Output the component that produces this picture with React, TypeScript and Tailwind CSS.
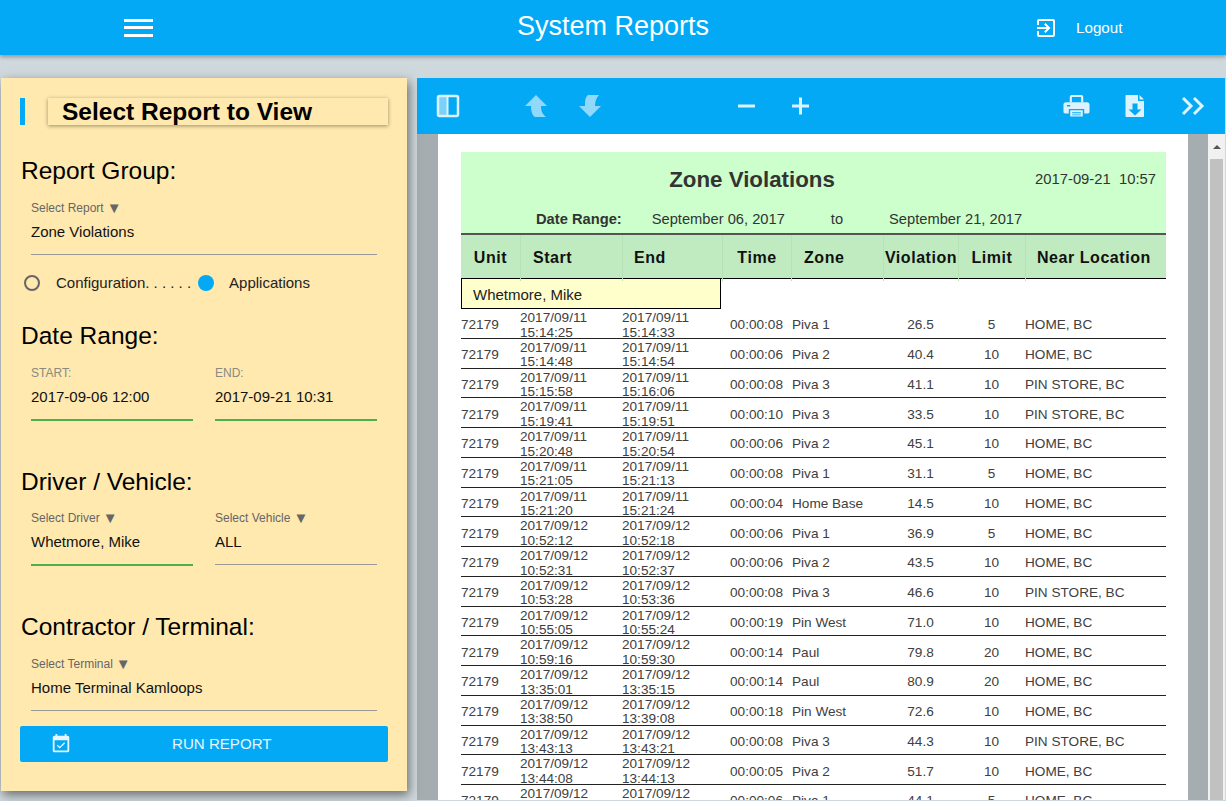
import React from "react";

const cols = "grid grid-cols-[59px_102px_100px_69px_92px_75px_67px_141px]";

type R = [string, string, string, string, string, string, string, string];
const HOME = "HOME, BC";
const PIN = "PIN STORE, BC";
const rows: R[] = [
  ["09/11", "15:14:25", "15:14:33", "08", "Piva 1", "26.5", "5", HOME],
  ["09/11", "15:14:48", "15:14:54", "06", "Piva 2", "40.4", "10", HOME],
  ["09/11", "15:15:58", "15:16:06", "08", "Piva 3", "41.1", "10", PIN],
  ["09/11", "15:19:41", "15:19:51", "10", "Piva 3", "33.5", "10", PIN],
  ["09/11", "15:20:48", "15:20:54", "06", "Piva 2", "45.1", "10", HOME],
  ["09/11", "15:21:05", "15:21:13", "08", "Piva 1", "31.1", "5", HOME],
  ["09/11", "15:21:20", "15:21:24", "04", "Home Base", "14.5", "10", HOME],
  ["09/12", "10:52:12", "10:52:18", "06", "Piva 1", "36.9", "5", HOME],
  ["09/12", "10:52:31", "10:52:37", "06", "Piva 2", "43.5", "10", HOME],
  ["09/12", "10:53:28", "10:53:36", "08", "Piva 3", "46.6", "10", PIN],
  ["09/12", "10:55:05", "10:55:24", "19", "Pin West", "71.0", "10", HOME],
  ["09/12", "10:59:16", "10:59:30", "14", "Paul", "79.8", "20", HOME],
  ["09/12", "13:35:01", "13:35:15", "14", "Paul", "80.9", "20", HOME],
  ["09/12", "13:38:50", "13:39:08", "18", "Pin West", "72.6", "10", HOME],
  ["09/12", "13:43:13", "13:43:21", "08", "Piva 3", "44.3", "10", PIN],
  ["09/12", "13:44:08", "13:44:13", "05", "Piva 2", "51.7", "10", HOME],
  ["09/12", "13:45:02", "13:45:08", "06", "Piva 1", "44.1", "5", HOME],
];

function Heading({ children, cls }: { children: React.ReactNode; cls: string }) {
  return <div className={`h-[30px] text-[24.5px] leading-[30px] text-black ${cls}`}>{children}</div>;
}

function Field({ label, value, green, arrow, cls, light }: { label: string; value: string; green?: boolean; arrow?: boolean; cls: string; light?: boolean }) {
  return (
    <div className={`w-[162px] ${cls}`}>
      <div className={`flex h-[16px] items-center text-[12px] leading-[16px] ${light ? "text-[#8a8a80]" : "text-[#666]"}`}>
        <span>{label}</span>
        {arrow ? <span className="-mt-[2px] ml-[3px] text-[15px] leading-none">▼</span> : null}
      </div>
      <div className="mt-[6px] h-[20px] text-[15px] leading-[20px] text-[#111]">{value}</div>
      {green ? <div className="mt-[12px] h-[2px] bg-[#4caf50]" /> : <div className="mt-[12px] h-px bg-[#999]" />}
    </div>
  );
}

function Toolbar() {
  return (
    <div className="flex h-[56px] shrink-0 items-center bg-[#03a9f4] text-[#dcf3fe]">
      <svg className="ml-[19px] h-[24px] w-[24px]" viewBox="0 0 24 24" fill="none">
        <rect x="2" y="2" width="20" height="20" rx="1.5" stroke="currentColor" strokeWidth="2.5" />
        <rect x="3" y="3" width="8" height="18" fill="currentColor" opacity="0.55" />
        <rect x="10.5" y="3" width="2" height="18" fill="currentColor" />
      </svg>
      <svg className="ml-[64px] h-[24px] w-[24px] opacity-65" viewBox="0 0 24 24" fill="currentColor">
        <path d="M12 1 L23 12 H17 C17 16 18 20 22 23 H11 C8 21 7 17 7 12 H1 Z" />
      </svg>
      <svg className="ml-[30px] h-[24px] w-[24px] opacity-65" viewBox="0 0 24 24" fill="currentColor">
        <path d="M12 23 L23 12 H17 C17 8 18 4 21 1 H10 C7 3 7 8 7 12 H1 Z" />
      </svg>
      <svg className="ml-[132px] h-[24px] w-[24px]" viewBox="0 0 24 24" fill="currentColor">
        <rect x="4" y="10.5" width="17" height="3" />
      </svg>
      <svg className="ml-[30px] h-[24px] w-[24px]" viewBox="0 0 24 24" fill="currentColor">
        <path d="M11 3.500h3v7h7v3h-7v7h-3v-7H4v-3h7z" />
      </svg>
      <svg className="ml-[251px] h-[26px] w-[27px]" viewBox="0 0 28 24" fill="currentColor">
        <path d="M7 2.5C7 1.4 7.9.5 9 .5h10c1.100 0 2 .9 2 2V8h-2.200V2.700H9.200V8H7z" />
        <path d="M3 8h22c1.500 0 2.500 1 2.500 2.500V18c0 1-.8 1.700-1.700 1.700H22V15H6v4.700H2.200C1.300 19.700.500 19 .500 18v-7.500C.5 9 1.500 8 3 8zm1 3v1.500h3.500V11z" fillRule="evenodd" />
        <path d="M7.500 16.500h13V23h-13zM9.500 18.500v1h9v-1zM9.500 20.800v.8h9v-.8z" fillRule="evenodd" />
      </svg>
      <svg className="ml-[33px] h-[24px] w-[24px]" viewBox="0 0 24 24" fill="currentColor">
        <path d="M3.500 1H15v6h6v15c0 .6-.4 1-1 1H3.500c-.6 0-1-.4-1-1V2c0-.6.4-1 1-1zM9.500 9.500v6H5.500l6.500 6 6.500-6h-4v-6z" fillRule="evenodd" />
        <path d="M16.500 1 21 5.500h-4.500z" />
      </svg>
      <svg className="ml-[33px] h-[24px] w-[26px]" viewBox="0 0 26 24" fill="none" stroke="currentColor" strokeWidth="3">
        <path d="M3 4l8 8-8 8" />
        <path d="M14 4l8 8-8 8" />
      </svg>
    </div>
  );
}

export default function App() {
  return (
    <div className="flex h-screen w-screen flex-col overflow-hidden bg-[#cfd8dc] font-['Liberation_Sans',Arial,sans-serif]">
      <header className="relative z-10 grid h-[55px] shrink-0 grid-cols-[1fr_auto_1fr] items-center bg-[#03a9f4] text-white shadow-[0_2px_4px_rgba(0,0,0,0.3)]">
        <div className="pl-[124px]">
          <div className="flex h-[18px] w-[29px] flex-col justify-between">
            <div className="h-[3px] bg-white" />
            <div className="h-[3px] bg-white" />
            <div className="h-[3px] bg-white" />
          </div>
        </div>
        <h1 className="pb-[3px] text-[27px] leading-[32px] font-normal">System Reports</h1>
        <div className="flex items-center pl-[325px]">
          <svg className="h-[24px] w-[24px] shrink-0" viewBox="0 0 24 24" fill="currentColor">
            <path d="M10.090 15.590L11.500 17l5-5-5-5-1.410 1.410L12.670 11H3v2h9.670l-2.580 2.590zM19 3H5c-1.110 0-2 .9-2 2v4h2V5h14v14H5v-4H3v4c0 1.100.89 2 2 2h14c1.100 0 2-.9 2-2V5c0-1.100-.9-2-2-2z" />
          </svg>
          <span className="ml-[18px] text-[15.2px] leading-[20px]">Logout</span>
        </div>
      </header>

      <main className="flex min-h-0 flex-1 items-start gap-[10px] pt-[23px] pl-px">
        <aside className="relative h-[713px] w-[406px] shrink-0 overflow-hidden bg-[#ffe9af] pl-[19px] shadow-[2px_4px_10px_rgba(0,0,0,0.5)]">
          <div className="mt-[20px] flex h-[27px]">
            <div className="h-[27px] w-[5px] bg-[#03a9f4]" />
            <div className="ml-[23px] h-[27px] w-[340px] pl-[14px] text-[24.5px] leading-[27px] font-bold text-black shadow-[0_1px_4px_rgba(0,0,0,0.4)]">
              Select Report to View
            </div>
          </div>

          <Heading cls="mt-[31px] ml-px">Report Group:</Heading>
          <Field cls="mt-[14px] ml-[11px] w-[346px]" label="Select Report" value="Zone Violations" arrow />
          <div className="mt-[18px] ml-[4px] flex h-[20px] items-center text-[15px] text-[#222]">
            <div className="h-[16px] w-[16px] rounded-full border-2 border-[#666]" />
            <span className="ml-[16px]">Configuration. . . . . .</span>
            <div className="ml-[7px] h-[16px] w-[16px] rounded-full bg-[#03a9f4]" />
            <span className="ml-[15px]">Applications</span>
          </div>

          <Heading cls="mt-[28px] ml-px">Date Range:</Heading>
          <div className="mt-[14px] ml-[11px] flex gap-[22px]">
            <Field cls="" label="START:" value="2017-09-06 12:00" green light />
            <Field cls="" label="END:" value="2017-09-21 10:31" green light />
          </div>

          <Heading cls="mt-[46px] ml-px">Driver / Vehicle:</Heading>
          <div className="mt-[13px] ml-[11px] flex items-start gap-[22px]">
            <Field cls="" label="Select Driver" value="Whetmore, Mike" arrow green />
            <Field cls="" label="Select Vehicle" value="ALL" arrow />
          </div>

          <Heading cls="mt-[46px] ml-px">Contractor / Terminal:</Heading>
          <Field cls="mt-[14px] ml-[11px] w-[346px]" label="Select Terminal" value="Home Terminal Kamloops" arrow />

          <button className="mt-[15px] flex h-[36px] w-[368px] items-center rounded-[2px] bg-[#03a9f4] text-[15.1px] text-[#e6f6fe]">
            <svg className="ml-[30px] h-[22px] w-[22px] shrink-0" viewBox="0 0 24 24" fill="currentColor">
              <path d="M16.530 11.060L15.470 10l-4.880 4.880-2.120-2.120-1.060 1.060L10.590 17l5.940-5.940zM19 3h-1V1h-2v2H8V1H6v2H5c-1.110 0-1.990.9-1.990 2L3 19c0 1.100.89 2 2 2h14c1.100 0 2-.9 2-2V5c0-1.100-.9-2-2-2zm0 16H5V8h14v11z" />
            </svg>
            <span className="ml-[100px]">RUN REPORT</span>
          </button>
        </aside>

        <section className="flex h-[722px] w-[808px] shrink-0 flex-col overflow-hidden">
          <Toolbar />
          <div className="flex min-h-0 flex-1 bg-[#a6adb0] pl-[21px]">
            <div className="h-full w-[750px] shrink-0 overflow-hidden bg-white pt-[18px] pl-[23px] text-[#404040]">
              <div className="w-[705px]">
                <div className="relative h-[81px] bg-[#ccffcc] text-[#333]">
                  <div className="h-[54px] pt-[15px] pr-[123px] text-center text-[22.3px] leading-[26px] font-bold">Zone Violations</div>
                  <div className="absolute top-[19px] right-[10px] text-[14.8px] leading-[17px]">2017-09-21&nbsp;&nbsp;10:57</div>
                  <div className="flex h-[26px] items-center text-[14.7px]">
                    <span className="ml-[75px] font-bold">Date Range:</span>
                    <span className="ml-[30px]">September 06, 2017</span>
                    <span className="ml-[46px]">to</span>
                    <span className="ml-[46px]">September 21, 2017</span>
                  </div>
                </div>
                <div className={`${cols} h-[46px] items-stretch border-t-2 border-b border-t-[#555] border-b-black bg-[#c0eabf] text-[16px] leading-[46px] font-bold tracking-[0.55px] text-[#111]`}>
                  <div className="text-center">Unit</div>
                  <div className="border-l border-[#b7e2b6] pl-[12px]">Start</div>
                  <div className="border-l border-[#b7e2b6] pl-[11px]">End</div>
                  <div className="border-l border-[#b7e2b6] text-center">Time</div>
                  <div className="border-l border-[#b7e2b6] pl-[12px]">Zone</div>
                  <div className="border-l border-[#b7e2b6] text-center">Violation</div>
                  <div className="border-l border-[#b7e2b6] text-center">Limit</div>
                  <div className="border-l border-[#b7e2b6] pl-[11px]">Near Location</div>
                </div>
                <div className="flex h-[30px] w-[260px] items-center border border-t-0 border-black bg-[#ffffcc] pt-[3px] pl-[11px] text-[15px] text-[#222]">
                  Whetmore, Mike
                </div>
                {rows.map((r, i) => (
                  <div key={i} className={`${cols} h-[29.75px] items-center border-b border-[#222] pt-[2px] text-[13.6px] leading-[14.5px]`}>
                    <div>72179</div>
                    <div>
                      2017/{r[0]}
                      <br />
                      {r[1]}
                    </div>
                    <div>
                      2017/{r[0]}
                      <br />
                      {r[2]}
                    </div>
                    <div className="text-center">00:00:{r[3]}</div>
                    <div className="pl-px">{r[4]}</div>
                    <div className="text-center">{r[5]}</div>
                    <div className="text-center">{r[6]}</div>
                    <div>{r[7]}</div>
                  </div>
                ))}
              </div>
            </div>
            <div className="ml-[20px] flex h-full w-[17px] flex-col bg-[#f1f1f1]">
              <div className="flex h-[25px] items-center justify-center">
                <div className="h-0 w-0 border-x-[4px] border-b-[4px] border-x-transparent border-b-[#555]" />
              </div>
              <div className="mx-[2px] flex-1 bg-[#c1c1c1]" />
            </div>
          </div>
        </section>
      </main>
    </div>
  );
}
